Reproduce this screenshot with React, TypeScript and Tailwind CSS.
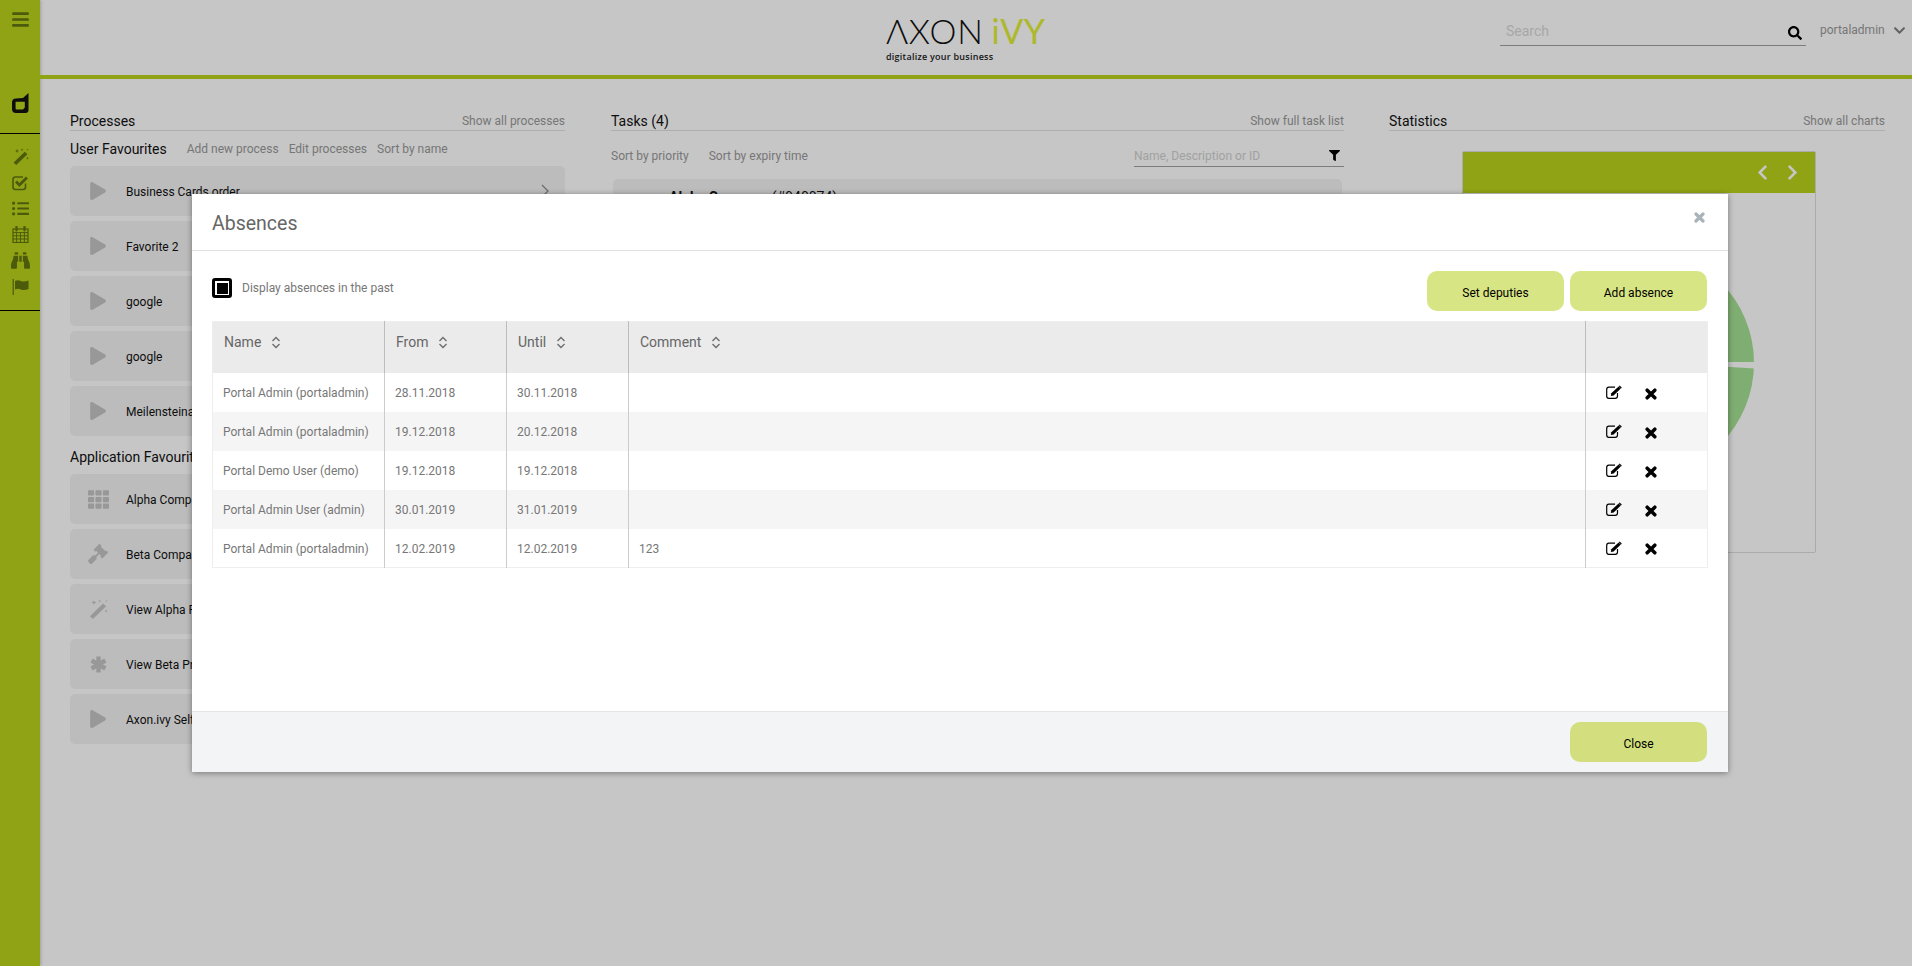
import React from "react";
import {
  FaBars, FaListUl, FaBinoculars, FaSearch, FaChevronDown, FaChevronLeft, FaChevronRight,
  FaFilter, FaPlay, FaTh, FaGavel,
} from "react-icons/fa";

type IconProps = { size?: number; className?: string };

function Wand({ size = 17, className }: IconProps) {
  return (
    <svg width={size} height={size} viewBox="0 0 17 17" className={className} fill="currentColor">
      <path d="M12.8 3.8 L15.4 6.2 L4.2 17 L1.6 14.6 Z" />
      <path d="M5 1 l.6 1.4 1.4.6 -1.4.6 -.6 1.4 -.6-1.4 -1.4-.6 1.4-.6 Z" />
      <path d="M10 .4 l.4 1 1 .4 -1 .4 -.4 1 -.4-1 -1-.4 1-.4 Z" />
      <path d="M15.4 8.8 l.4 1 1 .4 -1 .4 -.4 1 -.4-1 -1-.4 1-.4 Z" />
      <path d="M15.6 .6 l.3.8 .8.3 -.8.3 -.3.8 -.3-.8 -.8-.3 .8-.3 Z" />
    </svg>
  );
}

function CheckSq({ size = 17, className }: IconProps) {
  return (
    <svg width={size} height={size} viewBox="0 0 17 17" className={className} fill="none" stroke="currentColor">
      <path d="M13.5 9.5 V13 Q13.5 15.5 11 15.5 H3.5 Q1 15.5 1 13 V5.5 Q1 3 3.5 3 H11" strokeWidth="1.6" />
      <path d="M4 7.5 L7.4 11 L15 3.4" strokeWidth="2.8" />
    </svg>
  );
}

function Calendar({ size = 17, className }: IconProps) {
  return (
    <svg width={size} height={size} viewBox="0 0 17 17" className={className} fill="none" stroke="currentColor" strokeWidth="1">
      <rect x="1" y="3" width="15" height="13.5" strokeWidth="1.2" />
      <path d="M1 6.6 H16 M1 9.8 H16 M1 13 H16 M4.6 6.6 V16.5 M8.5 6.6 V16.5 M12.4 6.6 V16.5" />
      <path d="M4.5 .6 V4.4 M12.5 .6 V4.4" strokeWidth="2.2" strokeLinecap="round" />
    </svg>
  );
}

function Flag({ size = 17, className }: IconProps) {
  return (
    <svg width={size} height={size} viewBox="0 0 17 17" className={className} fill="currentColor">
      <rect x="0.6" y="1" width="1.2" height="16" />
      <path d="M3 3 Q6 1.4 8.6 3 Q12 4.4 16.5 2.6 V11 Q12 12.8 8.6 11.4 Q6 10 3 11.6 Z" />
    </svg>
  );
}

function Asterisk({ size = 17, className }: IconProps) {
  return (
    <svg width={size} height={size} viewBox="0 0 17 17" className={className} stroke="currentColor" strokeWidth="4.4">
      <path d="M8.5 .5 V16.5 M1.6 4.5 L15.4 12.5 M15.4 4.5 L1.6 12.5" />
    </svg>
  );
}

function Cross({ size = 11, className }: IconProps) {
  return (
    <svg width={size} height={size} viewBox="0 0 11 11" className={className} stroke="currentColor" strokeWidth="3.2" strokeLinecap="round">
      <path d="M2 2 L9 9 M9 2 L2 9" />
    </svg>
  );
}

function EditIcon({ className }: IconProps) {
  return (
    <svg width="16" height="14" viewBox="0 0 16 14" className={className}>
      <path d="M11.5 8 V11 Q11.5 13.3 9.2 13.3 H2.8 Q.7 13.3 .7 11 V4.4 Q.7 2.2 2.8 2.2 H9" fill="none" stroke="currentColor" strokeWidth="1.2" />
      <path d="M12.6 1.4 L14.8 3.6 L7.6 10.6 L4.8 11 L5.3 8.3 Z" fill="currentColor" />
      <path d="M13.6 .4 L15.8 2.6 L15 3.4 L12.8 1.2 Z" fill="currentColor" />
    </svg>
  );
}

const sideIcons = [
  { icon: Wand, size: 17 },
  { icon: CheckSq, size: 17 },
  { icon: FaListUl, size: 17 },
  { icon: Calendar, size: 17 },
  { icon: FaBinoculars, size: 19 },
  { icon: Flag, size: 17 },
];

const userFavs = [
  { icon: FaPlay, label: "Business Cards order", arrow: true, size: 18 },
  { icon: FaPlay, label: "Favorite 2", size: 18 },
  { icon: FaPlay, label: "google", size: 18 },
  { icon: FaPlay, label: "google", size: 18 },
  { icon: FaPlay, label: "Meilensteinantrag", size: 18 },
];
const appFavs = [
  { icon: FaTh, label: "Alpha Company", size: 21 },
  { icon: FaGavel, label: "Beta Company", size: 20 },
  { icon: Wand, label: "View Alpha Processes", size: 20 },
  { icon: Asterisk, label: "View Beta Processes", size: 17 },
  { icon: FaPlay, label: "Axon.ivy Self Service", size: 18 },
];
const rows = [
  ["Portal Admin (portaladmin)", "28.11.2018", "30.11.2018", ""],
  ["Portal Admin (portaladmin)", "19.12.2018", "20.12.2018", ""],
  ["Portal Demo User (demo)", "19.12.2018", "19.12.2018", ""],
  ["Portal Admin User (admin)", "30.01.2019", "31.01.2019", ""],
  ["Portal Admin (portaladmin)", "12.02.2019", "12.02.2019", "123"],
];

function SortIcon() {
  return (
    <svg width="10" height="13" viewBox="0 0 10 13" className="ml-[10px] inline-block" fill="none" stroke="#6e6e6e" strokeWidth="1.4">
      <path d="M1.5 5 L5 1.5 L8.5 5" />
      <path d="M1.5 8 L5 11.5 L8.5 8" />
    </svg>
  );
}

function Fav({ icon: Icon, label, arrow, size }: { icon: React.ComponentType<IconProps>; label: string; arrow?: boolean; size: number }) {
  return (
    <div className="flex h-[50px] items-center rounded-[5px] bg-[#f3f3f3]">
      <div className="flex w-[56px] justify-center">
        <Icon size={size} className="text-[#c4c4c4]" />
      </div>
      <span className="pt-[2px] text-[12px] text-[#111]">{label}</span>
      {arrow && (
        <svg width="8" height="14" viewBox="0 0 8 14" className="ml-auto mr-[16px]" fill="none" stroke="#888" strokeWidth="1.2">
          <path d="M1 1 L7 7 L1 13" />
        </svg>
      )}
    </div>
  );
}

function ColHead({ title, link }: { title: string; link: string }) {
  return (
    <div className="flex h-[19px] items-center justify-between border-b border-[#e0e0e0] text-[14px] leading-[18px] text-[#111]">
      <span>{title}</span>
      <span className="text-[12px] text-[#999]">{link}</span>
    </div>
  );
}

export default function App() {
  return (
    <div className="relative flex h-[966px] w-full overflow-hidden bg-white font-['Roboto',sans-serif]">
      <aside className="flex w-[40px] shrink-0 flex-col bg-[#b8d21b] text-[#63750f] shadow-[1px_0_3px_rgba(0,0,0,0.2)]">
        <div className="flex h-[134px] flex-col items-center border-b border-black pt-[10px]">
          <FaBars size={19} />
          <svg width="17" height="20" viewBox="0 0 17 20" className="mt-[64px]" fill="#111" fillRule="evenodd">
            <path d="M16.5 0 V17 Q16.5 20 13.5 20 H4 Q0 20 0 16 V9.5 Q0 5.5 4 5.5 L11 5 Z M3.6 8.8 V15.5 Q3.6 16.4 4.5 16.4 H11 L12.8 14.6 V8.8 Z" />
          </svg>
        </div>
        <div className="flex h-[177px] flex-col items-center gap-[8px] border-b border-black pt-[13px]">
          {sideIcons.map(({ icon: Icon, size }, i) => (
            <div key={i} className="flex h-[18px] items-center justify-center">
              <Icon size={size} />
            </div>
          ))}
        </div>
      </aside>

      <div className="flex min-w-0 flex-1 flex-col">
        <header className="flex h-[79px] shrink-0 items-start border-b-4 border-[#b8d21b]">
          <div className="ml-[846px] mt-[14px] flex flex-col">
            <div className="flex h-[34px] items-center font-['Lato',sans-serif] text-[34px] font-light leading-[34px] tracking-[0.6px] text-[#111]">
              <span>ΛXON</span>
              <span className="ml-[8px] font-normal text-[#dfee36]">iVY</span>
            </div>
            <span className="mt-[2px] font-['Open_Sans',sans-serif] text-[9px] font-semibold leading-[14px] tracking-[0.25px] text-[#222]">
              digitalize your business
            </span>
          </div>
          <div className="ml-auto mt-[20px] flex w-[412px] items-start">
            <div className="flex h-[26px] w-[306px] items-center justify-between border-b border-[#a0a0a0] pb-[2px] pl-[6px] pr-[4px]">
              <span className="text-[14px] text-[#d8d8d8]">Search</span>
              <FaSearch size={14} className="mt-[2px] text-black" />
            </div>
            <span className="ml-[14px] text-[12px] leading-[20px] text-[#999]">portaladmin</span>
            <FaChevronDown size={13} className="ml-[8px] mt-[4px] text-[#808080]" />
          </div>
        </header>

        <main className="flex gap-[45px] pl-[30px] pt-[33px]">
          <section className="w-[495px] shrink-0">
            <ColHead title="Processes" link="Show all processes" />
            <div className="mt-[8px] flex h-[20px] items-center text-[12px] text-[#999]">
              <span className="mr-[20px] text-[14px] text-[#111]">User Favourites</span>
              <span className="mr-[10px]">Add new process</span>
              <span className="mr-[10px]">Edit processes</span>
              <span>Sort by name</span>
            </div>
            <div className="mt-[7px] flex flex-col gap-[5px]">
              {userFavs.map((f, i) => <Fav key={i} {...f} />)}
            </div>
            <div className="mt-[11px] flex h-[20px] items-center text-[14px] text-[#111]">Application Favourites</div>
            <div className="mt-[7px] flex flex-col gap-[5px]">
              {appFavs.map((f, i) => <Fav key={i} {...f} />)}
            </div>
          </section>

          <section className="ml-[1px] w-[733px] shrink-0">
            <ColHead title="Tasks (4)" link="Show full task list" />
            <div className="mt-[14px] flex h-[22px] items-center text-[12px] text-[#999]">
              <span className="mr-[20px]">Sort by priority</span>
              <span>Sort by expiry time</span>
              <div className="ml-auto flex h-[22px] w-[210px] items-center justify-between border-b border-[#a0a0a0] pr-[4px]">
                <span className="text-[#d0d0d0]">Name, Description or ID</span>
                <FaFilter size={11} className="text-black" />
              </div>
            </div>
            <div className="mx-[2px] mt-[12px] h-[100px] rounded-[5px] bg-[#f3f3f3] pl-[56px] pt-[6px]">
              <span className="text-[14px] text-[#111]"><b className="font-bold">Alpha Company</b> (#940074)</span>
            </div>
          </section>

          <section className="w-[496px] shrink-0">
            <ColHead title="Statistics" link="Show all charts" />
            <div className="ml-[73px] mt-[20px] h-[402px] w-[354px] rounded-[2px] border border-[#dcdcdc]">
              <div className="flex h-[41px] items-center justify-end gap-[13px] bg-[#b8d21b] pr-[14px]">
                <FaChevronLeft size={17} className="text-white" />
                <FaChevronRight size={17} className="text-white" />
              </div>
              <div className="flex justify-center pt-[54px]">
                <svg width="232" height="232" viewBox="0 0 232 232">
                  <circle cx="116" cy="116" r="115" fill="#a4e093" />
                  <path d="M116 115 H232 V121.5 L116 114.6 Z" fill="#fff" />
                </svg>
              </div>
            </div>
          </section>
        </main>
      </div>

      <div className="absolute inset-0 bg-black/[0.224]" />

      <div className="absolute left-[192px] top-[194px] flex h-[578px] w-[1536px] flex-col bg-white shadow-[0_1px_6px_rgba(0,0,0,0.4)]">
        <div className="flex h-[57px] shrink-0 items-center justify-between border-b border-[#e2e2e2] pl-[20px] pr-[23px]">
          <span className="pt-[3px] text-[19.5px] leading-[56px] text-[#666]">Absences</span>
          <Cross size={11} className="mb-[9px] text-[#a9b4ba]" />
        </div>

        <div className="flex-1 px-[20px] pt-[20px]">
          <div className="flex h-[40px] items-start justify-between pr-[1px]">
            <label className="mt-[7px] flex items-center">
              <span className="flex h-[20px] w-[20px] items-center justify-center rounded-[3px] border-[3px] border-black bg-white">
                <span className="h-[11px] w-[11px] bg-black" />
              </span>
              <span className="ml-[10px] text-[12px] text-[#777]">Display absences in the past</span>
            </label>
            <div className="flex gap-[6px]">
              <button className="h-[40px] w-[137px] rounded-[10px] bg-[#d8e584] pt-[4px] text-[12px] text-black">Set deputies</button>
              <button className="h-[40px] w-[137px] rounded-[10px] bg-[#d8e584] pt-[4px] text-[12px] text-black">Add absence</button>
            </div>
          </div>

          <table className="mt-[10px] w-[1495px] table-fixed border-collapse border border-[#eeeeee]">
            <colgroup>
              <col className="w-[172px]" />
              <col className="w-[122px]" />
              <col className="w-[122px]" />
              <col className="w-[957px]" />
              <col className="w-[122px]" />
            </colgroup>
            <thead>
              <tr className="h-[51px] bg-[#ebebeb] text-left text-[14px] font-normal text-[#666]">
                {["Name", "From", "Until", "Comment"].map((h, i) => (
                  <th key={h} className={`pb-[10px] pl-[11px] font-normal ${i ? "border-l border-[#bdbdbd]" : ""}`}>
                    <span className="inline-flex items-center">{h}<SortIcon /></span>
                  </th>
                ))}
                <th className="border-l border-[#bdbdbd]" />
              </tr>
            </thead>
            <tbody>
              {rows.map((r, i) => (
                <tr key={i} className={`h-[39px] text-[12px] text-[#777] ${i % 2 ? "bg-[#f5f5f5]" : "bg-white"}`}>
                  {r.map((c, j) => (
                    <td key={j} className={`pl-[10px] pt-[2px] ${j ? "border-l border-[#cccccc]" : ""}`}>{c}</td>
                  ))}
                  <td className="border-l border-[#cccccc]">
                    <div className="flex items-center pl-[20px]">
                      <EditIcon className="text-black" />
                      <Cross size={12} className="ml-[23px] mt-[3px] text-black" />
                    </div>
                  </td>
                </tr>
              ))}
            </tbody>
          </table>
        </div>

        <div className="flex h-[61px] shrink-0 items-center justify-end border-t border-[#e4e4e4] bg-[#f3f4f6] pr-[21px]">
          <button className="h-[40px] w-[137px] rounded-[10px] bg-[#d3df7e] pt-[3px] text-[12px] text-black">Close</button>
        </div>
      </div>
    </div>
  );
}
